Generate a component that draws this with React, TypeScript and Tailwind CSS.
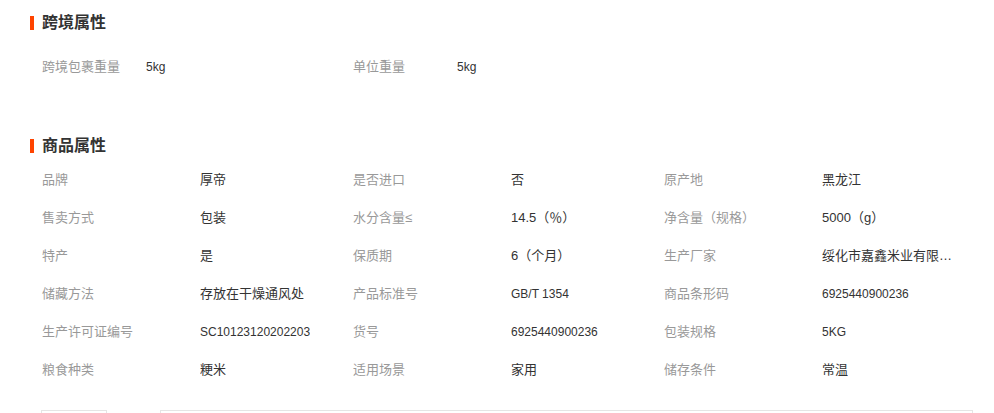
const crossBorder = [
  { label: "跨境包裹重量", value: "5kg" },
  { label: "单位重量", value: "5kg" },
];

const attrs = [
  { label: "品牌", value: "厚帝" },
  { label: "是否进口", value: "否" },
  { label: "原产地", value: "黑龙江" },
  { label: "售卖方式", value: "包装" },
  { label: "水分含量≤", value: "14.5（％）" },
  { label: "净含量（规格）", value: "5000（g）" },
  { label: "特产", value: "是" },
  { label: "保质期", value: "6（个月）" },
  { label: "生产厂家", value: "绥化市嘉鑫米业有限公司" },
  { label: "储藏方法", value: "存放在干燥通风处" },
  { label: "产品标准号", value: "GB/T 1354" },
  { label: "商品条形码", value: "6925440900236" },
  { label: "生产许可证编号", value: "SC10123120202203" },
  { label: "货号", value: "6925440900236" },
  { label: "包装规格", value: "5KG" },
  { label: "粮食种类", value: "粳米" },
  { label: "适用场景", value: "家用" },
  { label: "储存条件", value: "常温" },
];

const isAscii = (s: string) => /^[\x00-\x7f]+$/.test(s);

function SectionTitle({ children }: { children: string }) {
  return (
    <div className="flex h-[18px] items-center pl-[30px]">
      <span className="mr-[8px] h-[14px] w-[4px] bg-[#ff4400]" />
      <h3 className="text-[16px] font-bold leading-[18px] text-[#333]">
        {children}
      </h3>
    </div>
  );
}

export default function App() {
  return (
    <div
      className="w-[994px] bg-white pt-[14px]"
      style={{ fontFamily: '"Liberation Sans", "Noto Sans CJK SC", sans-serif' }}
    >
      <SectionTitle>跨境属性</SectionTitle>

      <div className="mt-[16px] grid grid-cols-[311px_311px_311px] pl-[42px]">
        {crossBorder.map((item) => (
          <div key={item.label} className="flex h-[38px] items-center">
            <span className="w-[104px] text-[13px] text-[#999]">{item.label}</span>
            <span className="text-[12px] text-[#333]">{item.value}</span>
          </div>
        ))}
      </div>

      <div className="mt-[51px]">
        <SectionTitle>商品属性</SectionTitle>
      </div>

      <div className="mt-[6px] grid grid-cols-[311px_311px_311px] pl-[42px]">
        {attrs.map((item) => (
          <div key={item.label} className="flex h-[38px] items-center">
            <span className="w-[158px] shrink-0 text-[13px] text-[#999]">
              {item.label}
            </span>
            <span
              className={`max-w-[131px] truncate text-[#333] ${
                isAscii(item.value) ? "text-[12px]" : "text-[13px]"
              }`}
            >
              {item.value}
            </span>
          </div>
        ))}
      </div>

      <div className="mt-[21px] flex items-start pl-[41px]">
        <div className="h-[32px] w-[66px] border border-[#e5e5e5]" />
        <div className="h-[32px] w-[53px]" />
        <div className="h-[32px] w-[813px] border border-[#e5e5e5]" />
      </div>
    </div>
  );
}
